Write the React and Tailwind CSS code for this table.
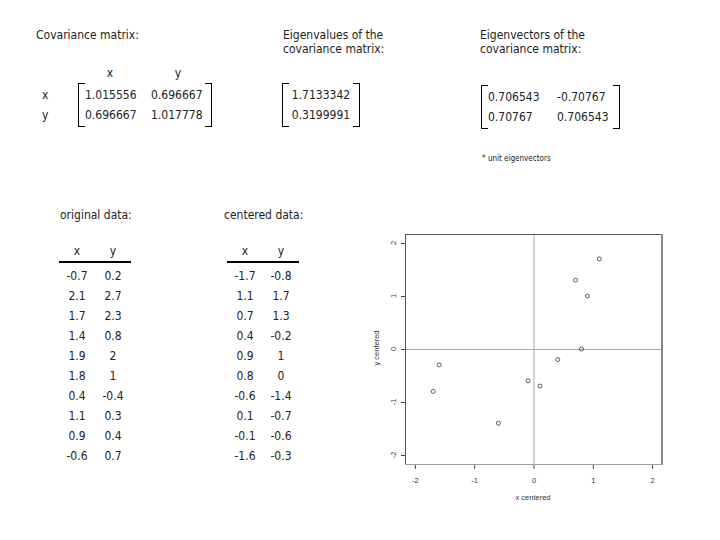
const cov = [
  ['1.015556', '0.696667'],
  ['0.696667', '1.017778'],
]
const eigVals = ['1.7133342', '0.3199991']
const eigVecs = [
  ['0.706543', '-0.70767'],
  ['0.70767', '0.706543'],
]
const original = [
  ['-0.7', '0.2'], ['2.1', '2.7'], ['1.7', '2.3'], ['1.4', '0.8'], ['1.9', '2'],
  ['1.8', '1'], ['0.4', '-0.4'], ['1.1', '0.3'], ['0.9', '0.4'], ['-0.6', '0.7'],
]
const centered = [
  ['-1.7', '-0.8'], ['1.1', '1.7'], ['0.7', '1.3'], ['0.4', '-0.2'], ['0.9', '1'],
  ['0.8', '0'], ['-0.6', '-1.4'], ['0.1', '-0.7'], ['-0.1', '-0.6'], ['-1.6', '-0.3'],
]

function LeftBracket() {
  return <div className="w-[7px] self-stretch border-y border-l border-black" />
}

function RightBracket() {
  return <div className="w-[7px] self-stretch border-y border-r border-black" />
}

function DataTable({ rows }) {
  return (
    <div className="w-[72px]">
      <div className="flex h-[22px] items-center border-b-2 border-black">
        <div className="w-[36px] text-center">x</div>
        <div className="w-[36px] text-center">y</div>
      </div>
      <div className="mt-[3px]">
        {rows.map((r, i) => (
          <div key={i} className="flex h-[20px] items-center">
            <div className="w-[36px] text-center">{r[0]}</div>
            <div className="w-[36px] text-center">{r[1]}</div>
          </div>
        ))}
      </div>
    </div>
  )
}

// plot uses page coordinates through the viewBox
const px = (v) => 534 + v * 59.3
const py = (v) => 349 - v * 53
const plotFont = "'Liberation Sans', Arial, sans-serif"

function ScatterPlot() {
  const ticks = [-2, -1, 0, 1, 2]
  return (
    <svg width="320" height="290" viewBox="360 225 320 290" className="block">
      <line x1="534" y1="235" x2="534" y2="464" stroke="#a8a8a8" strokeWidth="1" />
      <line x1="406" y1="349.5" x2="661" y2="349.5" stroke="#a8a8a8" strokeWidth="1" />
      <line x1="405.5" y1="234" x2="405.5" y2="465" stroke="#555" strokeWidth="1" />
      <line x1="405" y1="234.5" x2="663" y2="234.5" stroke="#555" strokeWidth="1" />
      <line x1="662" y1="234" x2="662" y2="465" stroke="#8a8a8a" strokeWidth="2" />
      <line x1="405" y1="464.5" x2="663" y2="464.5" stroke="#a0a0a0" strokeWidth="1" />
      {ticks.map((t) => (
        <g key={'y' + t}>
          <line x1="401" y1={py(t) + 0.5} x2="405" y2={py(t) + 0.5} stroke="#444" strokeWidth="1" />
          <text
            x="393"
            y={py(t)}
            transform={`rotate(-90 393 ${py(t)})`}
            textAnchor="middle"
            dominantBaseline="central"
            fontSize="7.5"
            fill="#333"
            fontFamily={plotFont}
          >
            {t}
          </text>
        </g>
      ))}
      {ticks.map((t) => (
        <g key={'x' + t}>
          <line x1={px(t)} y1="465" x2={px(t)} y2="469" stroke="#444" strokeWidth="1" />
          <text
            x={px(t)}
            y="480"
            textAnchor="middle"
            dominantBaseline="central"
            fontSize="7.5"
            fill="#333"
            fontFamily={plotFont}
          >
            {t}
          </text>
        </g>
      ))}
      <text x="533" y="497" textAnchor="middle" dominantBaseline="central" fontSize="7.5" fill="#333" fontFamily={plotFont}>
        x centered
      </text>
      <text
        x="376"
        y="348"
        transform="rotate(-90 376 348)"
        textAnchor="middle"
        dominantBaseline="central"
        fontSize="7.5"
        fill="#333"
        fontFamily={plotFont}
      >
        y centered
      </text>
      {centered.map((p, i) => (
        <circle
          key={i}
          cx={px(parseFloat(p[0]))}
          cy={py(parseFloat(p[1]))}
          r="2"
          fill="none"
          stroke="#333"
          strokeWidth="0.8"
        />
      ))}
    </svg>
  )
}

export default function App() {
  return (
    <div className="w-[720px] h-[540px] bg-white text-[#222] text-[12px] leading-[14px] font-['DejaVu_Sans',sans-serif] font-stretch-condensed overflow-hidden">
      <div className="flex h-[208px] pt-[28px] pl-[36px]">
        <div className="w-[247px]">
          <div className="h-[14px]">Covariance matrix:</div>
          <div className="mt-[24px] flex h-[14px] pl-[42px]">
            <div className="w-[64px] text-center">x</div>
            <div className="w-[72px] text-center">y</div>
          </div>
          <div className="mt-[3px] flex">
            <div className="w-[42px] py-[2px]">
              <div className="flex h-[20px] items-center pl-[6px]">x</div>
              <div className="flex h-[20px] items-center pl-[6px]">y</div>
            </div>
            <div className="flex h-[44px]">
              <LeftBracket />
              <div className="py-[2px]">
                {cov.map((r, i) => (
                  <div key={i} className="flex h-[20px] items-center">
                    <div className="w-[66px]">{r[0]}</div>
                    <div className="w-[54px]">{r[1]}</div>
                  </div>
                ))}
              </div>
              <RightBracket />
            </div>
          </div>
        </div>

        <div className="w-[197px]">
          <div>Eigenvalues of the</div>
          <div>covariance matrix:</div>
          <div className="mt-[27px] -ml-[1px] flex h-[44px]">
            <LeftBracket />
            <div className="w-[64px] py-[2px]">
              {eigVals.map((v) => (
                <div key={v} className="flex h-[20px] items-center justify-center">{v}</div>
              ))}
            </div>
            <RightBracket />
          </div>
        </div>

        <div className="flex-1">
          <div>Eigenvectors of the</div>
          <div>covariance matrix:</div>
          <div className="mt-[29px] ml-[1px] flex h-[44px]">
            <LeftBracket />
            <div className="py-[2px]">
              {eigVecs.map((r, i) => (
                <div key={i} className="flex h-[20px] items-center">
                  <div className="w-[67px]">{r[0]}</div>
                  <div className="w-[58px] pl-[2px]">{r[1]}</div>
                </div>
              ))}
            </div>
            <RightBracket />
          </div>
          <div className="mt-[25px] ml-[2px] text-[8px] leading-[10px]">* unit eigenvectors</div>
        </div>
      </div>

      <div className="flex items-start">
        <div className="ml-[59px] w-[165px]">
          <div className="pl-[1px]">original data:</div>
          <div className="mt-[19px]">
            <DataTable rows={original} />
          </div>
        </div>
        <div className="w-[136px]">
          <div>centered data:</div>
          <div className="mt-[19px] ml-[3px]">
            <DataTable rows={centered} />
          </div>
        </div>
        <div className="mt-[17px]">
          <ScatterPlot />
        </div>
      </div>
    </div>
  )
}
